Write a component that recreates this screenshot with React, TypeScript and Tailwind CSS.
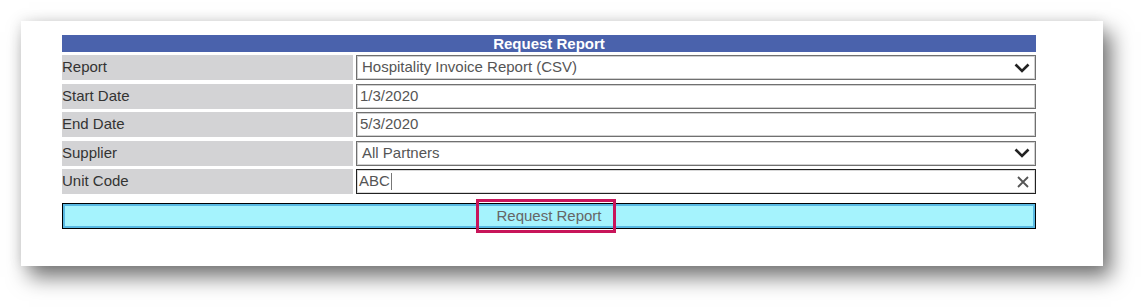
const rows = [
  { label: "Report", value: "Hospitality Invoice Report (CSV)", kind: "select" },
  { label: "Start Date", value: "1/3/2020", kind: "text" },
  { label: "End Date", value: "5/3/2020", kind: "text" },
  { label: "Supplier", value: "All Partners", kind: "select" },
  { label: "Unit Code", value: "ABC", kind: "focused" },
] as const;

function Chevron() {
  return (
    <svg width="16" height="10" viewBox="0 0 16 10" className="shrink-0">
      <polyline points="1.5,1.5 8,8 14.5,1.5" fill="none" stroke="#222" strokeWidth="2.6" />
    </svg>
  );
}

function Clear() {
  return (
    <svg width="12" height="12" viewBox="0 0 12 12" className="shrink-0">
      <path d="M1 1 L11 11 M11 1 L1 11" stroke="#555" strokeWidth="1.8" />
    </svg>
  );
}

function Field({ value, kind }: { value: string; kind: "select" | "text" | "focused" }) {
  const focused = kind === "focused";
  return (
    <div
      className={
        focused
          ? "flex h-full items-center justify-between border border-[#222] bg-white pr-[6px] pl-[2px] shadow-[inset_0_0_0_1px_#d8d8d8]"
          : kind === "select"
            ? "flex h-full items-center justify-between border border-[#707070] bg-white pr-[5px] pl-[5px] shadow-[inset_0_0_0_1px_#d0d0d0]"
            : "flex h-full items-center justify-between border border-[#707070] bg-white pr-[5px] pl-[3px] shadow-[inset_0_0_0_1px_#d0d0d0]"
      }
    >
      <span className="flex items-center text-[15px] text-[#555]">
        {value}
        {focused && <span className="ml-px inline-block h-[17px] w-px bg-[#777]" />}
      </span>
      {kind === "select" && <Chevron />}
      {focused && <Clear />}
    </div>
  );
}

export default function App() {
  return (
    <div className="h-[308px] w-[1145px] bg-white pt-[21px] pl-[21px] font-['Liberation_Sans',Arial,sans-serif]">
      <div className="h-[245px] w-[1082px] bg-white pt-[14px] pl-[41px] shadow-[8px_11px_20px_rgba(0,0,0,0.55),-1px_-1px_12px_rgba(0,0,0,0.08)]">
        <div className="flex w-[974px] flex-col">
          <div className="flex h-[17px] items-center justify-center bg-[#4a62ac] text-[15px] leading-none font-bold text-white">
            Request Report
          </div>
          <div className="mt-[3px] flex flex-col gap-[3.5px]">
            {rows.map((r) => (
              <div key={r.label} className="grid h-[25px] grid-cols-[291px_680px] gap-[3px]">
                <div className="flex items-center bg-[#d3d3d5] text-[15px] text-[#333]">{r.label}</div>
                <Field value={r.value} kind={r.kind} />
              </div>
            ))}
          </div>
          <div className="relative mt-[9px] flex h-[26px] items-center justify-center border border-black bg-[#a5f3fd] text-[15px] text-[#666] shadow-[inset_0_0_0_2px_#58b8e2]">
            Request Report
            <div className="pointer-events-none absolute top-[-5px] left-[413px] h-[34px] w-[140px] border-[3px] border-[#c8155a]" />
          </div>
        </div>
      </div>
    </div>
  );
}
